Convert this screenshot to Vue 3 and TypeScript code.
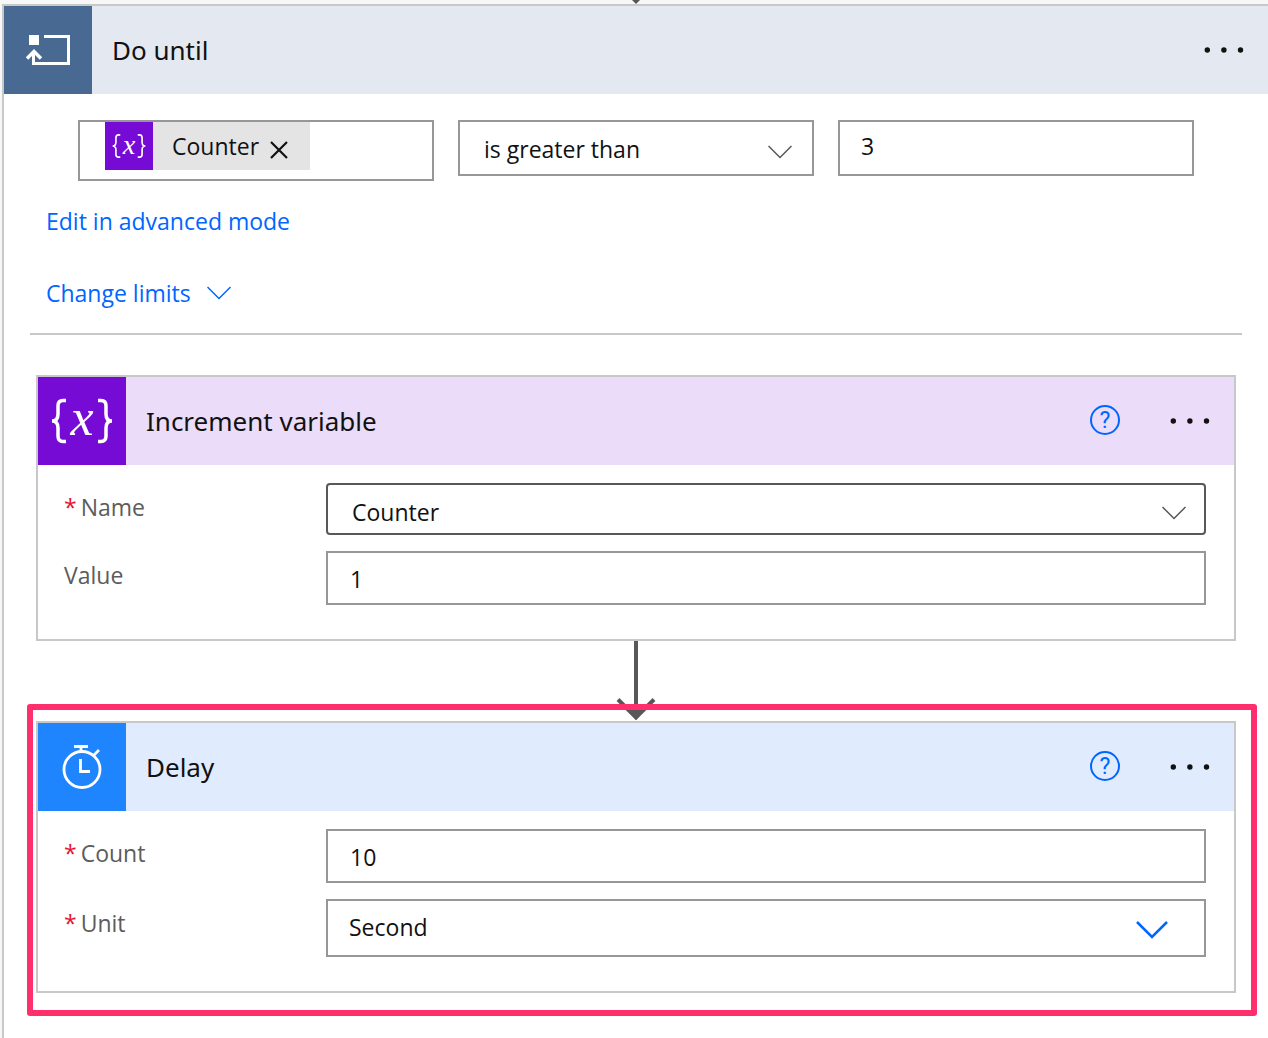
<script setup lang="ts">
import { ref } from 'vue'

const operator = ref('is greater than')
const limit = ref('3')
const variableName = ref('Counter')
const increment = ref('1')
const delayCount = ref('10')
const delayUnit = ref('Second')
</script>

<template>
  <main class="canvas">
    <svg class="incoming" width="12" height="4" viewBox="0 0 12 4" aria-hidden="true">
      <path d="M2 0h8L6 4z" fill="#555" />
    </svg>
    <section class="scope">
      <header class="head head-scope">
        <span class="tile tile-scope">
          <svg width="88" height="88" viewBox="0 0 88 88" fill="none" stroke="#fff" aria-hidden="true">
            <rect x="25" y="29" width="10" height="10" fill="#fff" stroke="none" />
            <path d="M40 30.500H64.500V57.500H29.500V46" stroke-width="3" />
            <path d="M23 52.500L30 45.500L37 52.500" stroke-width="3.500" />
          </svg>
        </span>
        <h1 class="title">Do until</h1>
        <button class="more" type="button" aria-label="More options">
          <svg width="40" height="8" viewBox="0 0 40 8" fill="#111" aria-hidden="true">
            <circle cx="3.300" cy="4" r="2.700" /><circle cx="19.900" cy="4" r="2.700" /><circle cx="36.500" cy="4" r="2.700" />
          </svg>
        </button>
      </header>

      <div class="condition">
        <div class="token-box">
          <span class="token">
            <svg class="token-icon" width="48" height="48" viewBox="0 0 88 88" aria-hidden="true">
              <path d="M28 23.500H25Q20 23.500 20 29V37Q20 44 14 44Q20 44 20 51V59Q20 64.500 25 64.500H28M60 23.500H63Q68 23.500 68 29V37Q68 44 74 44Q68 44 68 51V59Q68 64.500 63 64.500H60" fill="none" stroke="#fff" stroke-width="3" />
              <text class="glyph-x" x="44" y="58" text-anchor="middle">x</text>
            </svg>
            <span class="token-name">Counter</span>
            <button class="remove" type="button" aria-label="Remove Counter">
              <svg width="18" height="18" viewBox="0 0 18 18" aria-hidden="true">
                <path d="M1 1L17 17M17 1L1 17" stroke="#111" stroke-width="2.200" />
              </svg>
            </button>
          </span>
        </div>
        <div class="pick">
          <select v-model="operator" class="control operator" aria-label="Operator">
            <option>is greater than</option>
          </select>
          <svg class="chevron" width="24" height="14" viewBox="0 0 24 14" aria-hidden="true">
            <path d="M0.500 1L12 12.500L23.500 1" />
          </svg>
        </div>
        <input v-model="limit" class="control limit" type="text" aria-label="Value to compare" />
      </div>

      <nav class="links">
        <a href="#advanced">Edit in advanced mode</a>
        <a href="#limits" class="limits">
          Change limits
          <svg class="chevron-link" width="24" height="14" viewBox="0 0 24 14" aria-hidden="true">
            <path d="M0.500 1L12 12.500L23.500 1" />
          </svg>
        </a>
      </nav>
      <hr class="rule" />

      <div class="steps">
        <article class="card">
          <header class="head head-variable">
            <span class="tile tile-variable">
              <svg width="88" height="88" viewBox="0 0 88 88" aria-hidden="true">
                <path d="M28 23.500H25Q20 23.500 20 29V37Q20 44 14 44Q20 44 20 51V59Q20 64.500 25 64.500H28M60 23.500H63Q68 23.500 68 29V37Q68 44 74 44Q68 44 68 51V59Q68 64.500 63 64.500H60" fill="none" stroke="#fff" stroke-width="3.500" />
                <text class="glyph-x" x="44" y="58" text-anchor="middle">x</text>
              </svg>
            </span>
            <h2 class="title">Increment variable</h2>
            <button class="help" type="button" aria-label="Help">?</button>
            <button class="more" type="button" aria-label="More options">
              <svg width="40" height="8" viewBox="0 0 40 8" fill="#111" aria-hidden="true">
                <circle cx="3.300" cy="4" r="2.700" /><circle cx="19.900" cy="4" r="2.700" /><circle cx="36.500" cy="4" r="2.700" />
              </svg>
            </button>
          </header>
          <div class="fields">
            <div class="field">
              <label class="label" for="var-name"><span class="star">*</span>Name</label>
              <div class="pick">
                <select id="var-name" v-model="variableName" class="control name">
                  <option>Counter</option>
                </select>
                <svg class="chevron chevron-name" width="24" height="14" viewBox="0 0 24 14" aria-hidden="true">
                  <path d="M0.500 1L12 12.500L23.500 1" />
                </svg>
              </div>
            </div>
            <div class="field">
              <label class="label" for="var-value">Value</label>
              <input id="var-value" v-model="increment" class="control" type="text" />
            </div>
          </div>
        </article>

        <svg class="connector" width="40" height="80" viewBox="0 0 40 80" aria-hidden="true">
          <path d="M20 0V76M2 58.500L20 76.500L38 58.500" fill="none" stroke="#585858" stroke-width="4" />
          <path d="M12 69H28L20 79z" fill="#585858" />
        </svg>

        <article class="card marked">
          <header class="head head-delay">
            <span class="tile tile-delay">
              <svg width="88" height="88" viewBox="0 0 88 88" fill="none" stroke="#fff" aria-hidden="true">
                <circle cx="44" cy="46.500" r="18" stroke-width="2.800" />
                <path d="M36 23.500H50M43 23V29M56 32L61 27M42.500 36V48.500H52" stroke-width="2.800" />
              </svg>
            </span>
            <h2 class="title">Delay</h2>
            <button class="help" type="button" aria-label="Help">?</button>
            <button class="more" type="button" aria-label="More options">
              <svg width="40" height="8" viewBox="0 0 40 8" fill="#111" aria-hidden="true">
                <circle cx="3.300" cy="4" r="2.700" /><circle cx="19.900" cy="4" r="2.700" /><circle cx="36.500" cy="4" r="2.700" />
              </svg>
            </button>
          </header>
          <div class="fields">
            <div class="field">
              <label class="label" for="delay-count"><span class="star">*</span>Count</label>
              <input id="delay-count" v-model="delayCount" class="control" type="text" />
            </div>
            <div class="field">
              <label class="label" for="delay-unit"><span class="star">*</span>Unit</label>
              <div class="pick">
                <select id="delay-unit" v-model="delayUnit" class="control unit">
                  <option>Second</option>
                </select>
                <svg class="chevron chevron-unit" width="32" height="18" viewBox="0 0 32 18" aria-hidden="true">
                  <path d="M1 1L16 16L31 1" />
                </svg>
              </div>
            </div>
          </div>
        </article>
      </div>
    </section>
  </main>
</template>

<style>
body {
  margin: 0;
  background: #f7f7f7;
}
</style>

<style scoped>
* {
  box-sizing: border-box;
}

.canvas {
  position: relative;
  display: flex;
  min-height: 100vh;
  padding: 4px 0 0 2px;
  font-family: "Open Sans", "Noto Sans", sans-serif;
  font-size: 23px;
  color: #111;
}

.incoming {
  position: absolute;
  top: 0;
  left: calc(50% - 4px);
}

.scope {
  flex: 1;
  min-width: 0;
  padding-bottom: 45px;
  border: solid #c8c8c8;
  border-width: 2px 0 0 2px;
  background: #fff;
}

.head {
  display: flex;
  align-items: center;
  height: 88px;
  padding-right: 24px;
}

.head-scope { background: #e4e8f0; }
.head-variable { background: #ebdcf9; }
.head-delay { background: #e0ebfe; }

.tile {
  width: 88px;
  height: 88px;
}

.tile svg { display: block; }
.tile-scope { background: #486991; }
.tile-variable { background: #770bd6; }
.tile-delay { background: #1f85ff; }

.glyph-x {
  font-family: "Liberation Serif", serif;
  font-size: 52px;
  font-style: italic;
  fill: #fff;
}

.title {
  flex: 1;
  margin: 0 0 0 20px;
  font-family: "Noto Sans", "Open Sans", sans-serif;
  font-size: 26px;
  font-weight: 400;
}

button {
  padding: 0;
  border: 0;
  background: none;
  cursor: pointer;
}

.more {
  display: flex;
}

.help {
  width: 30px;
  height: 30px;
  margin: 0 50px 2px 0;
  border: 2px solid #0066ff;
  border-radius: 50%;
  font-family: Roboto, sans-serif;
  font-size: 23px;
  line-height: 28px;
  color: #0066ff;
}

.condition {
  display: grid;
  grid-template-columns: repeat(3, 1fr);
  gap: 24px;
  align-items: start;
  padding: 26px 74px 0;
}

.token-box {
  height: 61px;
  padding-left: 25px;
  border: 2px solid #979797;
}

.token {
  display: inline-flex;
  align-items: center;
  height: 48px;
  padding-right: 22px;
  background: #e4e4e4;
}

.token-icon { background: #770bd6; }

.token-name {
  margin: 0 11px 0 19px;
}

.remove {
  display: flex;
  margin-top: 8px;
}

.pick {
  position: relative;
}

.control {
  display: block;
  width: 100%;
  height: 54px;
  margin: 0;
  padding: 2px 22px 0;
  border: 2px solid #979797;
  border-radius: 0;
  outline: 0;
  background: #fff;
  font: inherit;
  color: inherit;
  appearance: none;
}

.operator {
  height: 56px;
  padding: 2px 24px 0;
}

.limit {
  height: 56px;
  padding: 0 21px 4px;
}

.name {
  height: 52px;
  padding: 6px 24px 0;
  border-color: #585858;
  border-radius: 4px;
}

.unit {
  height: 58px;
  padding: 0 21px 2px;
}

.chevron {
  position: absolute;
  top: 25px;
  right: 22px;
  fill: none;
  stroke: #585858;
  stroke-width: 1.5;
  pointer-events: none;
}

.chevron-name {
  top: 23px;
  right: 20px;
}

.chevron-unit {
  top: 22px;
  right: 38px;
  stroke: #0066ff;
  stroke-width: 2.5;
}

.links {
  display: flex;
  flex-direction: column;
  align-items: flex-start;
  gap: 40px;
  padding: 24px 42px;
}

.links a {
  line-height: 32px;
  color: #0066ff;
  text-decoration: none;
}

.limits {
  display: flex;
  align-items: center;
  gap: 16px;
}

.chevron-link {
  fill: none;
  stroke: #0066ff;
  stroke-width: 1.5;
}

.rule {
  height: 2px;
  margin: 0 26px;
  border: 0;
  background: #c8c8c8;
}

.steps {
  display: flex;
  flex-direction: column;
  padding: 40px 32px 0;
}

.card {
  position: relative;
  border: 2px solid #c8c8c8;
  background: #fff;
}

.marked::after {
  content: "";
  position: absolute;
  inset: -19px -23px -25px -11px;
  border: 6px solid #ff2f6d;
  border-radius: 3px;
  pointer-events: none;
}

.fields {
  display: grid;
  gap: 16px;
  padding: 18px 28px 34px 26px;
}

.field {
  display: grid;
  grid-template-columns: 262px 1fr;
  align-items: start;
}

.label {
  line-height: 48px;
  color: #5c5c5c;
}

.star {
  margin-right: 4px;
  color: #e81134;
}

.connector {
  display: block;
  align-self: center;
}
</style>
